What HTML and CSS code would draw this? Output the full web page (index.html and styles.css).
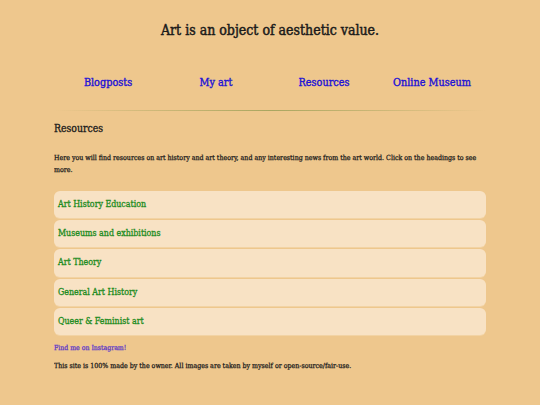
FILE: index.html
```html
<!DOCTYPE html>
<html>
<head>
<meta charset="utf-8">
<link rel="stylesheet" href="styles.css">
</head>
<body>
<header class="site-header">
  <h1 class="title">Art is an object of aesthetic value.</h1>
</header>
<nav class="nav">
  <a class="nav-link" href="#">Blogposts</a>
  <a class="nav-link" href="#">My art</a>
  <a class="nav-link" href="#">Resources</a>
  <a class="nav-link" href="#">Online Museum</a>
</nav>
<hr class="divider">
<main class="main">
  <h2 class="section-title">Resources</h2>
  <p class="intro">Here you will find resources on art history and art theory, and any interesting news from the art world. Click on the headings to see more.</p>
  <div class="list">
    <div class="item">Art History Education</div>
    <div class="item">Museums and exhibitions</div>
    <div class="item">Art Theory</div>
    <div class="item">General Art History</div>
    <div class="item">Queer &amp; Feminist art</div>
  </div>
  <a class="insta" href="#">Find me on Instagram!</a>
  <p class="footer">This site is 100% made by the owner. All images are taken by myself or open-source/fair-use.</p>
</main>
</body>
</html>
```
FILE: styles.css
```css
html, body {
  margin: 0;
  padding: 0;
}
body {
  background: #eec78d;
  font-family: "DejaVu Serif Condensed", "DejaVu Serif", serif;
  font-stretch: condensed;
  color: #1a1a1a;
  width: 432px;
  margin: 0 auto;
  -webkit-text-stroke: 0.25px currentColor;
}
.site-header {
  padding-top: 20px;
  height: 44px;
}
.title {
  margin: 0;
  text-align: center;
  font-size: 14px;
  font-weight: normal;
  line-height: 21px;
  -webkit-text-stroke: 0.45px currentColor;
}
.nav {
  display: grid;
  grid-template-columns: repeat(4, 1fr);
  margin-top: 9px;
  height: 22px;
}
.nav-link {
  text-align: center;
  color: #1d12d6;
  text-decoration: none;
  font-size: 10.8px;
  line-height: 20px;
  -webkit-text-stroke: 0.35px currentColor;
}
.divider {
  border: 0;
  height: 1px;
  margin: 15px 0 0;
  background: linear-gradient(to right, rgba(178,166,100,0), #a9a660 50%, rgba(178,166,100,0));
}
.main {
  padding-top: 8px;
}
.section-title {
  margin: 0;
  font-size: 10.4px;
  font-weight: normal;
  line-height: 18px;
  -webkit-text-stroke: 0.3px currentColor;
}
.intro {
  margin: 15px 0 0;
  font-size: 7px;
  line-height: 12px;
}
.list {
  display: flex;
  flex-direction: column;
  gap: 2px;
  margin-top: 15px;
}
.item {
  background: #f8e2c4;
  border-radius: 6px;
  box-shadow: 0 1px 0 #f2d3a4;
  height: 27.2px;
  line-height: 27.2px;
  padding: 0 4px;
  color: #1f8c1f;
  font-size: 8.8px;
  -webkit-text-stroke: 0.3px currentColor;
}
.insta {
  display: block;
  margin-top: 7px;
  color: #5a35c8;
  text-decoration: none;
  font-size: 6.9px;
  line-height: 12px;
}
.footer {
  margin: 6px 0 0;
  font-size: 7px;
  line-height: 12px;
}
```
